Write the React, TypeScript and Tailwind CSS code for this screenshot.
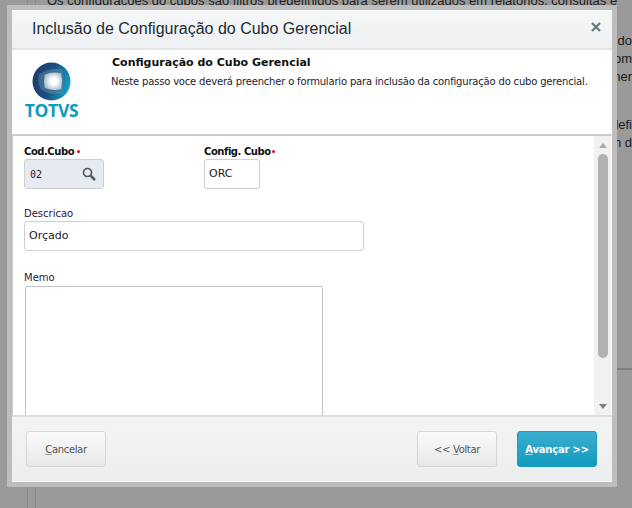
import React from "react";

const ui = "font-['DejaVu_Sans',sans-serif]";

function Logo() {
  return (
    <div className="flex w-[75px] flex-col items-center">
      <svg width="39" height="39" viewBox="0 0 40 40" className="block">
        <defs>
          <linearGradient id="ring" x1="0" y1="0.3" x2="1" y2="0.6">
            <stop offset="0" stopColor="#1d3b6c" />
            <stop offset="0.5" stopColor="#1a4f7f" />
            <stop offset="1" stopColor="#14a3c4" />
          </linearGradient>
          <radialGradient id="core" cx="0.55" cy="0.5" r="0.6">
            <stop offset="0.3" stopColor="#ffffff" />
            <stop offset="1" stopColor="#9fb4c8" />
          </radialGradient>
        </defs>
        <circle cx="20" cy="20" r="19.5" fill="url(#ring)" />
        <path d="M7 12.5 Q20 5 31 7.5 Q34 20 31 32 Q20 35.5 9 28 Q5.5 20 7 12.5Z" fill="#5d86a8" opacity="0.55" />
        <path d="M13 13 Q21 9.5 30 11.5 Q31.5 20 30 28 Q21 30 13 26.5 Q11.5 20 13 13Z" fill="url(#core)" />
      </svg>
      <span className="mt-[1px] font-['Open_Sans',sans-serif] text-[17.5px] leading-[17px] font-bold tracking-[-0.3px] text-[#0d9bbd]">TOTVS</span>
    </div>
  );
}

function Label({ children, bold, req, dotGap }: { children: React.ReactNode; bold?: boolean; req?: boolean; dotGap?: string }) {
  return (
    <label className={`flex h-[14px] items-start text-[10px] leading-[13px] ${bold ? "font-bold tracking-[-0.45px] text-[#111]" : "text-[#2b1540]"}`}>
      {children}
      {req && <span className={`mt-[5px] size-[3px] rounded-full bg-[#f00] ${dotGap}`} />}
    </label>
  );
}

function Field({ value, className }: { value: string; className: string }) {
  return (
    <div className={`flex h-[30px] items-center rounded-[3px] border border-[#cfcfcf] bg-white px-[4px] pt-[1px] text-[11px] text-[#1a1a2a] ${className}`}>
      {value}
    </div>
  );
}

function Btn({ children, primary, className = "" }: { children: React.ReactNode; primary?: boolean; className?: string }) {
  return (
    <button
      className={`flex h-[36px] w-[80px] items-center justify-center rounded-[3px] border text-[10px] ${
        primary
          ? "border-[#1a9cc2] bg-linear-to-b from-[#38aecf] to-[#0f9ac0] font-bold tracking-[-0.2px] text-white"
          : "border-[#d6d6d6] bg-linear-to-b from-[#fafafa] to-[#e8e8e8] tracking-[-0.35px] text-[#555]"
      } ${className}`}
    >
      {children}
    </button>
  );
}

export default function App() {
  return (
    <div className="relative h-[508px] w-[632px] overflow-hidden bg-[#9a9a9a]">
      {/* page behind the dialog */}
      <div className="flex h-full">
        <div className="w-[28px] shrink-0 border-r border-[#8a8a8a]" />
        <div className="w-[8px] shrink-0 border-r border-[#8a8a8a]" />
        <div className="min-w-0 flex-1 font-['Liberation_Sans',sans-serif] text-[13px] leading-[18px] text-[#1c1c1c]">
          <p className="-mt-[8px] ml-[11px] whitespace-nowrap">Os configurações do cubos são filtros predefinidos para serem utilizados em relatórios, consultas e</p>
          <p className="mt-[22px] text-right">do</p>
          <p className="text-right">com</p>
          <p className="text-right">ner</p>
          <p className="mt-[30px] text-right">lefi</p>
          <p className="text-right">n d</p>
          <div className="mt-[216px] h-[2px] bg-[#808080]" />
        </div>
      </div>

      {/* dialog */}
      <div className="absolute top-[5px] left-[7px] h-[482px] w-[610px] border-[5px] border-[#bdbdbd]">
        <div className="flex h-full flex-col bg-white">
          <header className="flex h-[40px] shrink-0 items-center justify-between border-b-2 border-[#e2e3e4] bg-linear-to-b from-[#f6f7f7] to-[#eef0f1] pr-[10px] pl-[20px]">
            <h1 className="font-['Liberation_Sans',sans-serif] text-[16px] text-[#222b33]">Inclusão de Configuração do Cubo Gerencial</h1>
            <svg width="12" height="12" viewBox="0 0 12 12" className="mb-[4px]">
              <path d="M2 2l8 8M10 2l-8 8" stroke="#6b7680" strokeWidth="2.2" />
            </svg>
          </header>

          <section className={`flex h-[84px] shrink-0 ${ui}`}>
            <div className="w-[100px] shrink-0 pt-[12px] pl-[2px]">
              <Logo />
            </div>
            <div className="pt-[6px]">
              <h2 className="text-[11px] leading-[14px] font-bold text-[#111]">Configuração do Cubo Gerencial</h2>
              <p className="mt-[5px] ml-[-1px] text-[10px] leading-[14px] tracking-[-0.18px] text-[#221a30]">Neste passo voce deverá preencher o formulario para inclusão da configuração do cubo gerencial.</p>
            </div>
          </section>

          <section className={`flex min-h-0 flex-1 overflow-hidden border-t-2 border-r border-l border-t-[#cccccc] border-r-white border-l-[#cccccc] ${ui}`}>
            <div className="min-w-0 flex-1 overflow-hidden pt-[9px] pl-[11px]">
              <div className="flex gap-[100px]">
                <div className="w-[80px]">
                  <Label bold req dotGap="ml-[3px]">Cod.Cubo</Label>
                  <div className="flex h-[30px] items-center justify-between rounded-[3px] border border-[#cfcfcf] bg-[#e8eaf1] pt-[1px] pr-[7px] pl-[5px] font-['DejaVu_Sans_Mono',monospace] text-[10px] text-[#2b1540]">
                    02
                    <svg width="14" height="14" viewBox="0 0 14 14" className="mb-[2px]">
                      <circle cx="5.5" cy="5.5" r="4" fill="none" stroke="#4d5863" strokeWidth="1.7" />
                      <path d="M8.6 8.6L13 13" stroke="#4d5863" strokeWidth="2.6" />
                    </svg>
                  </div>
                </div>
                <div>
                  <Label bold req dotGap="ml-[1px]">Config. Cubo</Label>
                  <Field value="ORC" className="w-[56px]" />
                </div>
              </div>
              <div className="mt-[18px]">
                <Label>Descricao</Label>
                <Field value="Orçado" className="w-[340px]" />
              </div>
              <div className="mt-[20px]">
                <Label>Memo</Label>
                <div className="mt-[1px] ml-[1px] h-[160px] w-[298px] rounded-[2px] border border-[#c4c4c4] bg-white" />
              </div>
            </div>
            <div className="flex w-[17px] shrink-0 flex-col items-center bg-[#f1f1f1] pt-[6px] pb-[5px]">
              <svg width="10" height="7" viewBox="0 0 10 7"><path d="M5 1l4 5H1z" fill="#a8a8a8" /></svg>
              <div className="mt-[5px] h-[204px] w-[10px] rounded-[5px] bg-[#b1b1b1]" />
              <svg width="10" height="7" viewBox="0 0 10 7" className="mt-auto"><path d="M1 1h8L5 6z" fill="#7f7f7f" /></svg>
            </div>
          </section>

          <footer className={`flex h-[67px] shrink-0 items-start border-t-2 border-b border-t-[#dddddd] border-b-white bg-linear-to-b from-[#f3f4f4] to-[#ecedee] pt-[14px] pr-[15px] pl-[14px] ${ui}`}>
            <Btn><span><u className="decoration-[#999]">C</u>ancelar</span></Btn>
            <Btn className="ml-auto"><span>&lt;&lt; <u className="decoration-[#999]">V</u>oltar</span></Btn>
            <Btn primary className="ml-[20px]"><span><u className="decoration-[#9ddcee]">A</u>vançar &gt;&gt;</span></Btn>
          </footer>
        </div>
      </div>
    </div>
  );
}
